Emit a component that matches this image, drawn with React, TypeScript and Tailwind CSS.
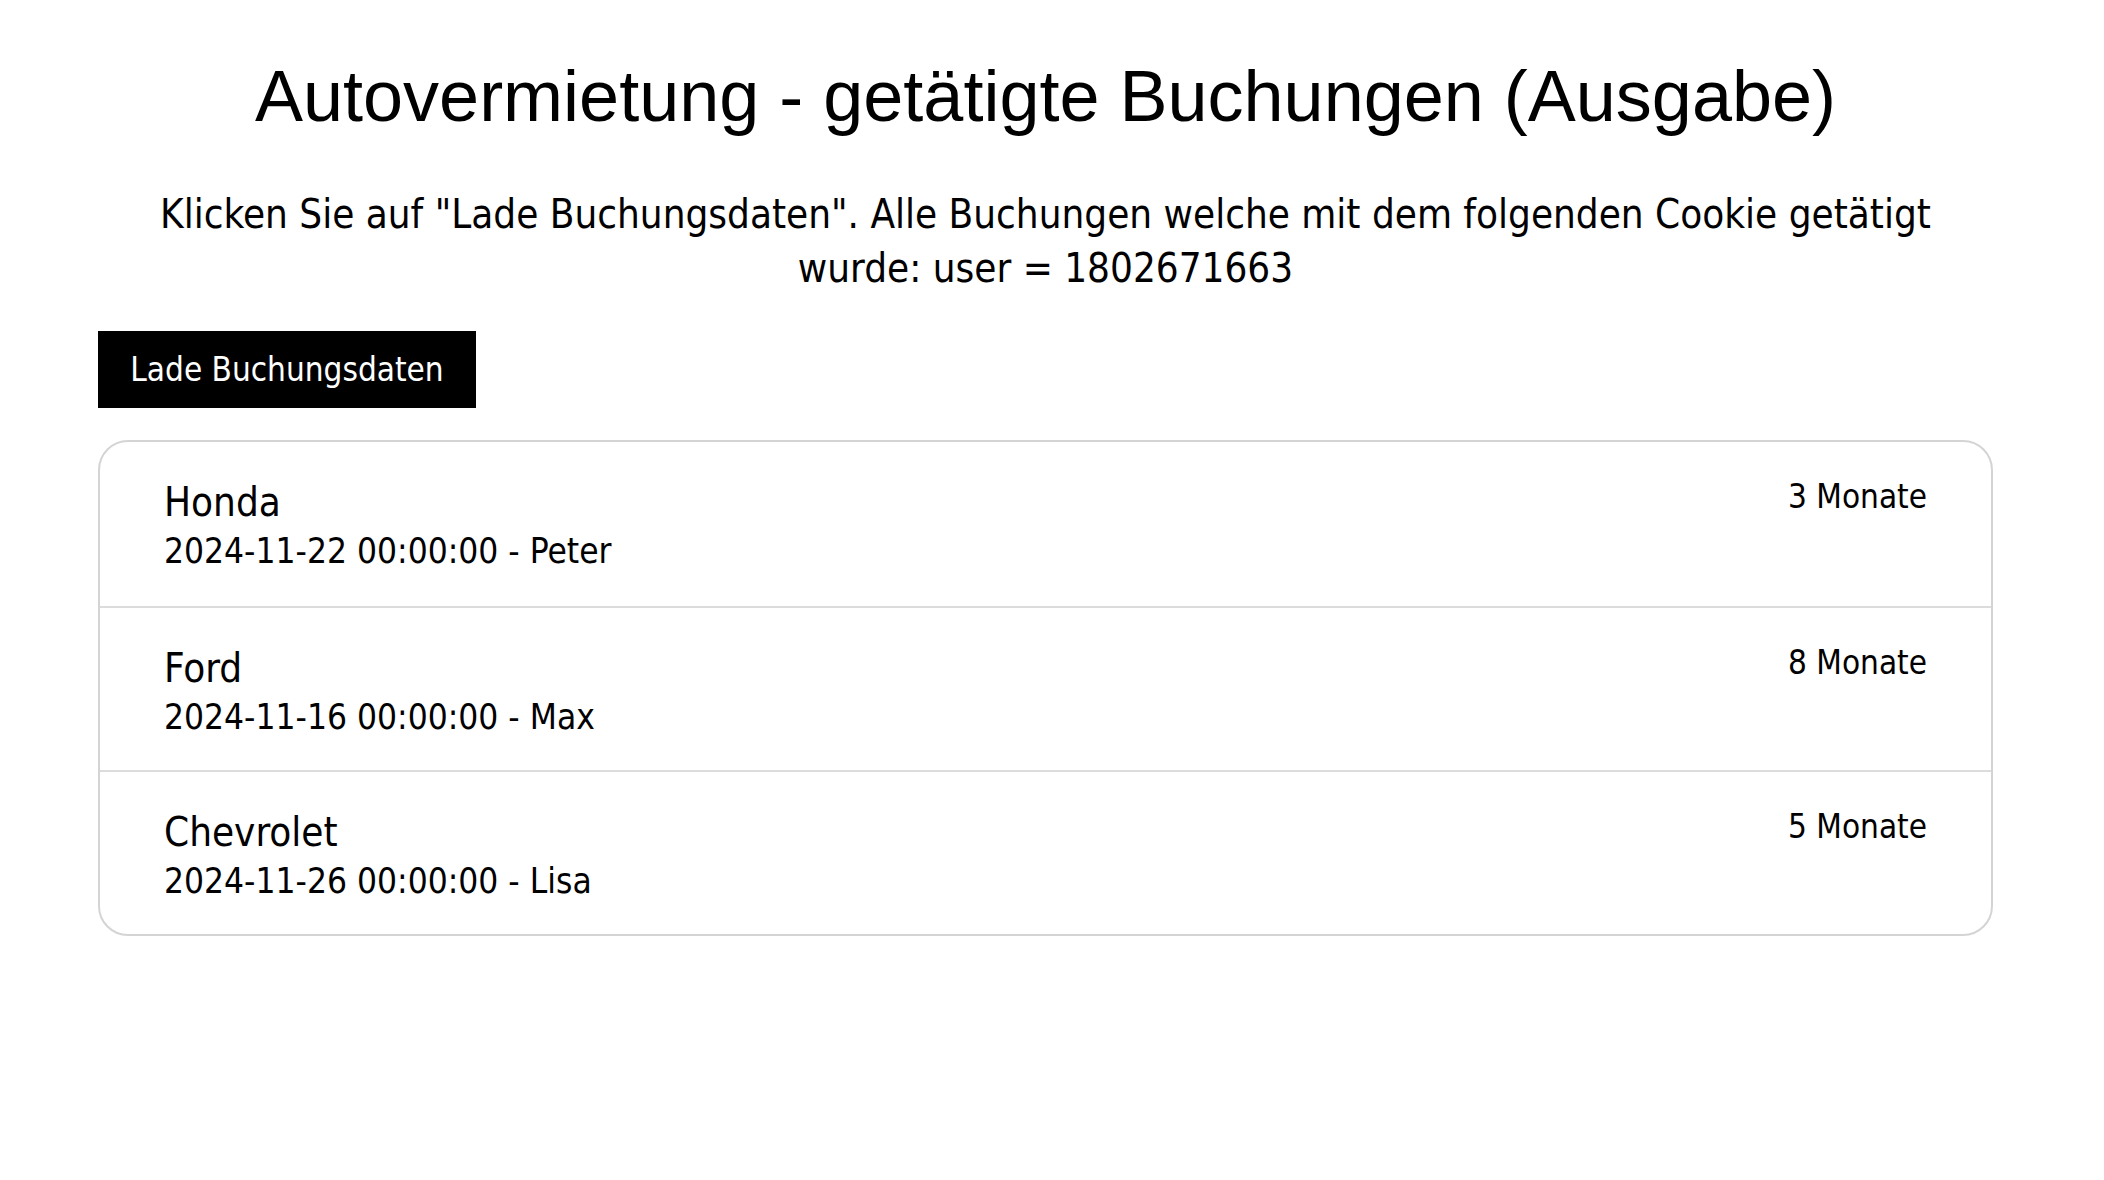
const bookings = [
  { car: "Honda", date: "2024-11-22 00:00:00", name: "Peter", months: 3 },
  { car: "Ford", date: "2024-11-16 00:00:00", name: "Max", months: 8 },
  { car: "Chevrolet", date: "2024-11-26 00:00:00", name: "Lisa", months: 5 },
];

const body = "font-['DejaVu_Sans',Verdana,sans-serif] font-stretch-condensed";

export default function App() {
  return (
    <div className={`min-h-screen bg-white text-black pl-[98px] pr-[111px] ${body}`}>
      <h1 className="pt-[52px] text-center font-['Liberation_Sans',Arial,sans-serif] text-[72px] leading-[88px] font-normal font-stretch-normal">
        Autovermietung - getätigte Buchungen (Ausgabe)
      </h1>

      <p className="mt-[47px] px-[48px] text-center text-[40px] leading-[54px]">
        Klicken Sie auf "Lade Buchungsdaten". Alle Buchungen welche mit dem folgenden Cookie getätigt wurde: user = 1802671663
      </p>

      <button className="mt-[36px] h-[77px] w-[378px] bg-black text-white text-[33px]">
        Lade Buchungsdaten
      </button>

      <div className="mt-[32px] rounded-[30px] border-2 border-[#d4d4d4] overflow-hidden">
        {bookings.map((b, i) => (
          <div
            key={b.car}
            className={`flex h-[164px] justify-between px-[64px] pt-[34px] ${i > 0 ? "border-t-2 border-[#dcdcdc]" : ""}`}
          >
            <div>
              <div className="text-[40px] leading-[52px]">{b.car}</div>
              <div className="text-[35px] leading-[46px]">
                {b.date} - {b.name}
              </div>
            </div>
            <div className="text-[33px] leading-[42px]">{b.months} Monate</div>
          </div>
        ))}
      </div>
    </div>
  );
}
